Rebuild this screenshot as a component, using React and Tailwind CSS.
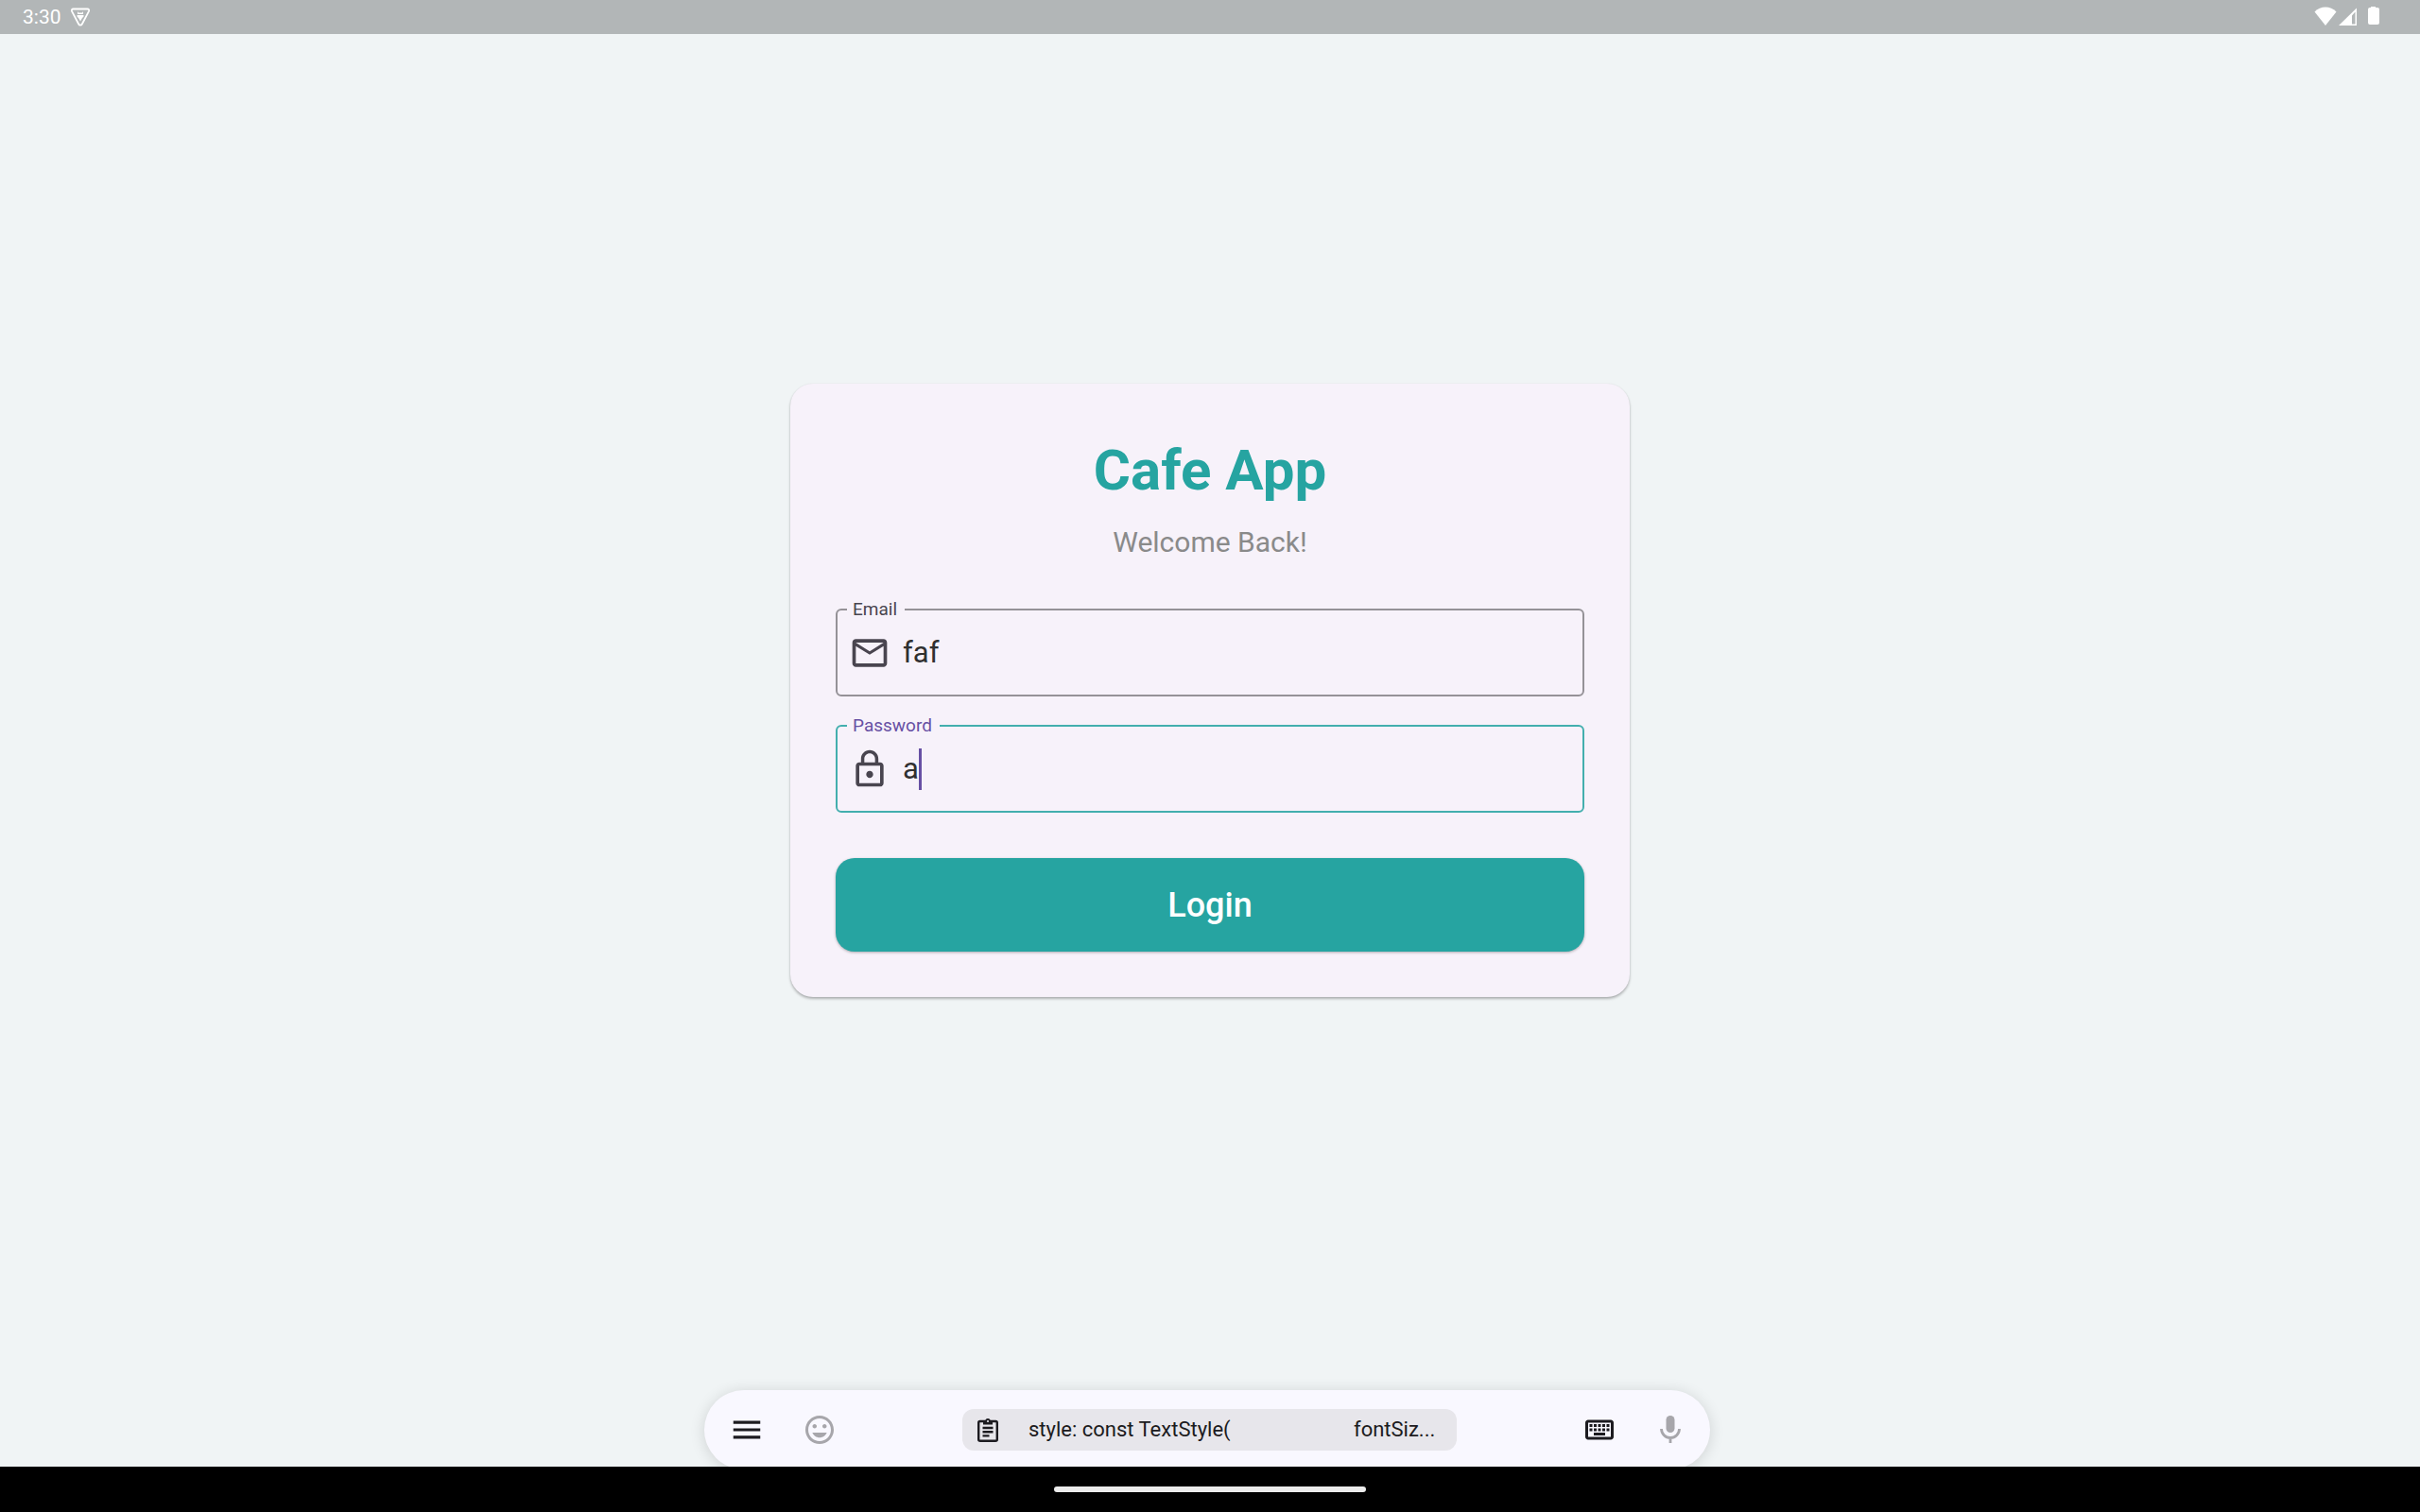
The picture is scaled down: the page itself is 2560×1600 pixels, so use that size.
import { MdOutlineEmail, MdLockOutline, MdMenu, MdInsertEmoticon, MdOutlineKeyboard, MdMic } from "react-icons/md";

function ClipboardIcon() {
  return (
    <svg className="h-[30px] w-[30px]" viewBox="0 0 30 30" fill="none" stroke="currentColor" strokeWidth="2.400" strokeLinecap="butt">
      <rect x="5.200" y="6" width="19.600" height="20.800" rx="1.600" />
      <path d="M9.500 13h11M9.500 17.200h11M9.500 21.400h7" />
      <path d="M10 5h2.300a2.800 2.800 0 0 1 5.400 0H20v4.500H10z" fill="currentColor" stroke="none" />
      <circle cx="15" cy="6" r="1.100" fill="#e7e6eb" stroke="none" />
    </svg>
  );
}

function StatusBar() {
  return (
    <header className="flex h-9 shrink-0 items-center justify-between bg-[#b2b6b7] pl-6 pr-9 text-white">
      <div className="flex items-center gap-2">
        <span className="text-[21px] leading-6">3:30</span>
        <svg className="size-6" viewBox="0 0 24 24" fill="none">
          <path d="M4.500 3.500h15c1.400 0 2.100 1.200 1.500 2.400l-7.200 13.600c-.8 1.500-2.800 1.500-3.600 0L3 5.900C2.400 4.700 3.100 3.500 4.500 3.500z" stroke="currentColor" strokeWidth="1.800" />
          <path d="M9 6l1 1.500h4L15 6v3H9zM8.500 10h7v1.500l-1.500 1.500-2 3.500-2-3.500-1.500-1.500z" fill="currentColor" />
        </svg>
      </div>
      <div className="flex items-center">
        <svg className="h-6 w-6" viewBox="0 0 24 24" fill="currentColor">
          <path d="M0.500 6.500C7-0.200 17-0.200 23.500 6.500L12 21z" />
        </svg>
        <svg className="h-6 w-6" viewBox="0 0 24 24" fill="currentColor">
          <path fillRule="evenodd" d="M21 2.500V21H2zM19.500 6.500L16 10.500V19.500h3.500z" />
        </svg>
        <svg className="h-6 w-7" viewBox="0 0 28 24" fill="currentColor">
          <path d="M12 1h5v1h2a2 2 0 0 1 2 2V18a2 2 0 0 1-2 2h-8a2 2 0 0 1-2-2V4a2 2 0 0 1 2-2h1z" />
        </svg>
      </div>
    </header>
  );
}

function LoginCard() {
  return (
    <form className="w-[888px] max-w-full rounded-3xl bg-[#f7f2fa] p-12 shadow-[0_2px_3px_rgba(0,0,0,0.28),0_0_2px_rgba(0,0,0,0.06)]">
      <h1 className="text-center text-[60px] font-bold leading-[88px] text-[#26a4a1]">Cafe App</h1>
      <p className="mt-2.5 text-center text-[30px] leading-11 text-[#8a8a8a]">Welcome Back!</p>

      <div className="relative mt-12 flex h-[93px] items-center gap-[13px] rounded-md border-2 border-[#959297] pl-3">
        <label htmlFor="email" className="absolute -top-[11px] left-2.5 bg-[#f7f2fa] pl-1.5 pr-2 text-[19px] leading-5 text-[#49454f]">Email</label>
        <MdOutlineEmail className="size-11 text-[#49454f]" />
        <input id="email" type="text" defaultValue="faf" className="min-w-0 flex-1 bg-transparent text-[31px] leading-11 text-[#303030] outline-none" />
      </div>

      <div className="relative mt-[30px] flex h-[93px] items-center gap-[13px] rounded-md border-2 border-[#43afae] pl-3">
        <label htmlFor="password" className="absolute -top-[11px] left-2.5 bg-[#f7f2fa] pl-1.5 pr-2 text-[19px] leading-5 text-[#6750a4]">Password</label>
        <MdLockOutline className="size-11 text-[#49454f]" />
        <div className="flex items-center">
          <input id="password" type="text" defaultValue="a" className="field-sizing-content bg-transparent text-[31px] leading-11 text-[#303030] caret-transparent outline-none" />
          <span className="h-11 w-[3px] bg-[#6750a4]" />
        </div>
      </div>

      <button type="submit" className="mt-12 h-[99px] w-full rounded-[20px] bg-[#26a4a1] text-[36px] font-medium text-white shadow-[0_1px_3px_rgba(0,0,0,0.3)]">
        Login
      </button>
    </form>
  );
}

function KeyboardBar() {
  return (
    <div className="flex h-[127px] shrink-0 items-start justify-center overflow-hidden pr-1.5 pt-[46px]">
      <div className="flex h-[84px] w-[1064px] items-center rounded-full bg-[#f9f8ff] pl-[26px] pr-6 shadow-[0_2px_16px_rgba(0,0,0,0.14)]">
        <button type="button" aria-label="Menu" className="mr-10 text-[#1c1b20]"><MdMenu className="size-[38px]" /></button>
        <button type="button" aria-label="Emoji" className="text-[#a7a6ab]"><MdInsertEmoticon className="size-9" /></button>
        <button type="button" className="ml-[133px] flex h-11 w-[523px] items-center rounded-xl bg-[#e7e6eb] pl-3 text-[22px] leading-7 text-[#1c1b20]">
          <ClipboardIcon />
          <span className="ml-7 w-[344px] whitespace-nowrap text-left">style: const TextStyle(</span>
          <span>fontSiz...</span>
        </button>
        <button type="button" aria-label="Keyboard" className="ml-auto mr-[39px] text-[#1c1b20]"><MdOutlineKeyboard className="size-9" /></button>
        <button type="button" aria-label="Voice input" className="text-[#a7a6ab]">
          <svg className="size-9" viewBox="0 0 36 36" fill="none">
            <rect x="13.500" y="3" width="9" height="18" rx="4.500" fill="currentColor" />
            <path d="M8.500 17a9.500 9.500 0 0 0 19 0M18 26.500V32" stroke="currentColor" strokeWidth="2.800" />
          </svg>
        </button>
      </div>
    </div>
  );
}

export default function App() {
  return (
    <div className="flex min-h-screen flex-col bg-[#f0f4f5] font-['Roboto',sans-serif]">
      <StatusBar />
      <main className="flex flex-1 items-center justify-center">
        <LoginCard />
      </main>
      <KeyboardBar />
      <footer className="flex h-12 shrink-0 items-center justify-center bg-black">
        <span className="h-1.5 w-[330px] rounded-full bg-[#ebebeb]" />
      </footer>
    </div>
  );
}
